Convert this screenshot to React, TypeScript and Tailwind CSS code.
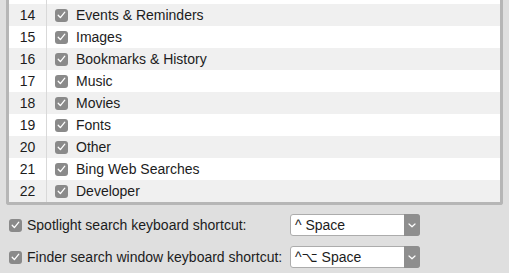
import React from "react";

const rows = [
  { n: 14, label: "Events & Reminders" },
  { n: 15, label: "Images" },
  { n: 16, label: "Bookmarks & History" },
  { n: 17, label: "Music" },
  { n: 18, label: "Movies" },
  { n: 19, label: "Fonts" },
  { n: 20, label: "Other" },
  { n: 21, label: "Bing Web Searches" },
  { n: 22, label: "Developer" },
];

function Check() {
  return (
    <span className="flex h-[13px] w-[13px] shrink-0 items-center justify-center rounded-[3px] bg-[#8a8a8a]">
      <svg width="9" height="8" viewBox="0 0 9 8" fill="none">
        <path d="M1.2 4.2 L3.4 6.6 L7.8 1.2" stroke="#ffffff" strokeWidth="1.3" strokeLinecap="round" strokeLinejoin="round" />
      </svg>
    </span>
  );
}

function Popup({ text }: { text: string }) {
  return (
    <div className="flex h-[22px] w-[130px] items-stretch rounded-[3px] border border-[#acacac] bg-white">
      <div className="flex flex-1 items-center pl-[4px] text-[14px] text-[#1c1c1c]">{text}</div>
      <div className="-my-px -mr-px flex w-[16px] items-center justify-center rounded-r-[3px] bg-[#8e8e8e]">
        <svg width="8" height="5" viewBox="0 0 8 5" fill="none">
          <path d="M1 1 L4 3.8 L7 1" stroke="#ffffff" strokeWidth="1.2" strokeLinecap="round" strokeLinejoin="round" />
        </svg>
      </div>
    </div>
  );
}

export default function App() {
  return (
    <div
      className="h-[273px] w-[509px] overflow-hidden bg-[#dfdfdf] text-[#1c1c1c]"
      style={{ fontFamily: '"Helvetica Neue", "Liberation Sans", Arial, "DejaVu Sans", sans-serif' }}
    >
      <div className="mx-[6px] rounded-b-[3px] border-x-[3px] border-b-[3px] border-[#b6b6b6]">
        <div className="flex h-[4px] bg-white">
          <div className="w-[38px] border-r border-[#d9d9d9]" />
        </div>
        {rows.map((r, i) => (
          <div key={r.n} className={`flex h-[22px] items-center ${i % 2 === 0 ? "bg-[#f0f0f0]" : "bg-white"}`}>
            <div className="flex h-full w-[38px] items-center justify-center border-r border-[#d9d9d9] text-[14px]">{r.n}</div>
            <div className="flex items-center gap-[8px] pl-[8px] text-[14px]">
              <Check />
              <span>{r.label}</span>
            </div>
          </div>
        ))}
      </div>
      <div className="flex flex-col gap-[10px] pt-[9px]">
        <div className="flex items-center">
          <div className="flex w-[290px] items-center gap-[5px] pl-[9px] text-[14px]">
            <Check />
            <span>Spotlight search keyboard shortcut:</span>
          </div>
          <Popup text="^ Space" />
        </div>
        <div className="flex items-center">
          <div className="flex w-[290px] items-center gap-[5px] pl-[9px] text-[14px]">
            <Check />
            <span>Finder search window keyboard shortcut:</span>
          </div>
          <Popup text="^⌥ Space" />
        </div>
      </div>
    </div>
  );
}
